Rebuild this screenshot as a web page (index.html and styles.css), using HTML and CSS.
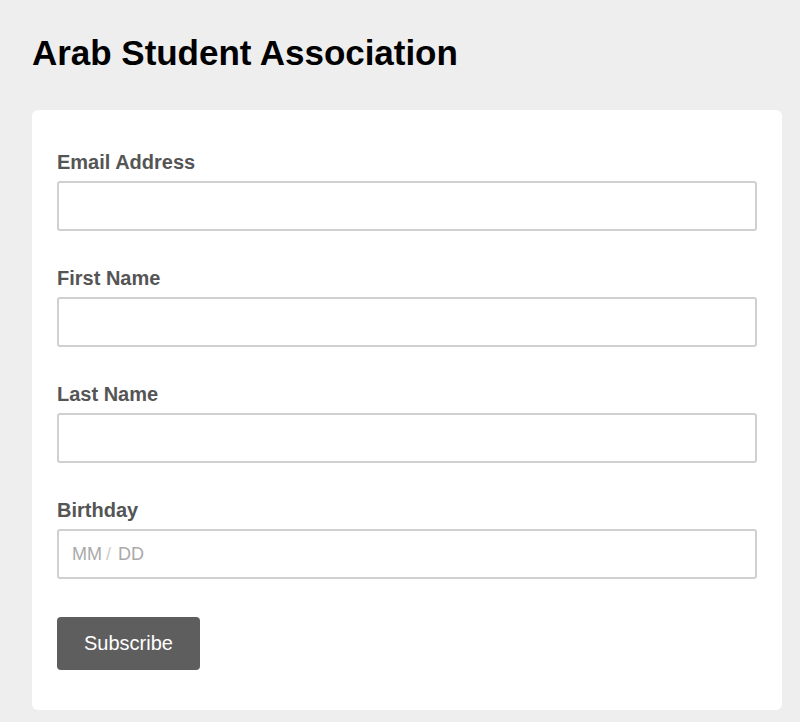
FILE: index.html
```html
<!DOCTYPE html>
<html>
<head>
<meta charset="utf-8">
<link rel="stylesheet" href="styles.css">
</head>
<body>
<div class="page">
  <h1 class="title">Arab Student Association</h1>
  <form class="card">
    <div class="field">
      <label class="label">Email Address</label>
      <input class="input" type="text">
    </div>
    <div class="field">
      <label class="label">First Name</label>
      <input class="input" type="text">
    </div>
    <div class="field">
      <label class="label">Last Name</label>
      <input class="input" type="text">
    </div>
    <div class="field last">
      <label class="label">Birthday</label>
      <div class="input date">
        <input class="date-part" type="text" placeholder="MM">
        <span class="sep">/</span>
        <input class="date-part" type="text" placeholder="DD">
      </div>
    </div>
    <button class="button" type="button">Subscribe</button>
  </form>
</div>
</body>
</html>
```
FILE: styles.css
```css
html, body {
  margin: 0;
  padding: 0;
  background: #eeeeee;
}
body {
  font-family: "Liberation Sans", Arial, sans-serif;
}
.page {
  padding: 32px 18px 12px 32px;
}
.title {
  margin: 0 0 36px 0;
  font-size: 35px;
  line-height: 42px;
  font-weight: bold;
  color: #000;
  letter-spacing: -0.03px;
}
.card {
  background: #fff;
  border-radius: 6px;
  padding: 40px 25px 40px 25px;
  display: flex;
  flex-direction: column;
  align-items: flex-start;
}
.field {
  display: flex;
  flex-direction: column;
  gap: 7px;
  width: 100%;
  margin-bottom: 35px;
}
.field.last {
  margin-bottom: 38px;
}
.label {
  font-size: 20px;
  line-height: 24px;
  font-weight: bold;
  color: #555555;
}
.input {
  box-sizing: border-box;
  width: 100%;
  height: 50px;
  border: 2px solid #d0d0d0;
  border-radius: 3px;
  background: #fff;
  padding: 0 13px;
  font-family: "Liberation Sans", Arial, sans-serif;
  font-size: 18px;
  outline: none;
  margin: 0;
}
.date {
  display: flex;
  align-items: center;
}
.date-part {
  border: none;
  outline: none;
  padding: 0;
  margin: 0;
  width: 30px;
  font-family: "Liberation Sans", Arial, sans-serif;
  font-size: 18px;
  color: #333;
  background: transparent;
}
.date-part::placeholder {
  color: #aaaaaa;
}
.sep {
  color: #cccccc;
  font-size: 18px;
  margin: 0 7px 0 4px;
}
.button {
  height: 53px;
  padding: 0 27px;
  background: #5e5e5e;
  color: #fff;
  border: none;
  border-radius: 4px;
  font-family: "Liberation Sans", Arial, sans-serif;
  font-size: 20px;
  cursor: pointer;
}
```
